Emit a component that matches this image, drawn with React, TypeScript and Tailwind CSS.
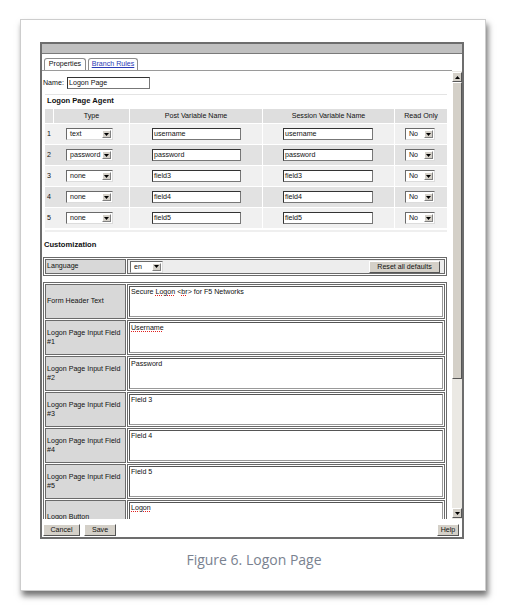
import React from "react";

const F = "font-['Liberation_Sans',Arial,sans-serif]";

function Arrow({ up }: { up?: boolean }) {
  return (
    <svg width="5" height="3" viewBox="0 0 5 3" className="block">
      <path d={up ? "M0 3H5L2.5 0Z" : "M0 0H5L2.5 3Z"} fill="#000" />
    </svg>
  );
}

function Select({ value, cls }: { value: string; cls: string }) {
  return (
    <div
      className={`flex h-[12px] items-stretch bg-white border border-t-[#6a6a6a] border-l-[#6a6a6a] border-b-[#dcdcdc] border-r-[#dcdcdc] ${cls}`}
    >
      <div className="flex-1 pl-[3px] leading-[10px] text-[7.1px] overflow-hidden whitespace-nowrap text-[#111]">
        {value}
      </div>
      <div className="w-[9px] my-[1px] mr-[1px] bg-[#d4d0c8] border border-t-white border-l-white border-b-[#808080] border-r-[#808080] flex items-center justify-center">
        <Arrow />
      </div>
    </div>
  );
}

function Input({ value, cls }: { value: string; cls: string }) {
  return (
    <div
      className={`h-[12px] bg-white border border-t-[#333] border-l-[#333] border-b-[#777] border-r-[#777] pl-[1px] text-[7.1px] leading-[10px] text-[#111] ${cls}`}
    >
      {value}
    </div>
  );
}

function Btn({ label, cls }: { label: string; cls: string }) {
  return (
    <div
      className={`h-[12px] bg-[#d4d0c8] border border-t-white border-l-white border-b-[#555] border-r-[#555] text-[7.1px] leading-[10px] text-center text-[#111] ${cls}`}
    >
      {label}
    </div>
  );
}

const rows = [
  ["1", "text", "username"],
  ["2", "password", "password"],
  ["3", "none", "field3"],
  ["4", "none", "field4"],
  ["5", "none", "field5"],
];

const Wavy = ({ children }: { children: React.ReactNode }) => (
  <span className="underline decoration-dotted decoration-[#e02020] decoration-[1px] underline-offset-[1px]">
    {children}
  </span>
);

const cust: { label: React.ReactNode; value: React.ReactNode }[] = [
  {
    label: "Form Header Text",
    value: (
      <>
        Secure <Wavy>Logon</Wavy> &lt;<Wavy>br</Wavy>&gt; for F5 Networks
      </>
    ),
  },
  { label: <>Logon Page Input Field<br />#1</>, value: <Wavy>Username</Wavy> },
  { label: <>Logon Page Input Field<br />#2</>, value: "Password" },
  { label: <>Logon Page Input Field<br />#3</>, value: "Field 3" },
  { label: <>Logon Page Input Field<br />#4</>, value: "Field 4" },
  { label: <>Logon Page Input Field<br />#5</>, value: "Field 5" },
  { label: "Logon Button", value: <Wavy>Logon</Wavy> },
];

export default function App() {
  return (
    <div className={`w-[506px] h-[609px] bg-white pt-[19px] pl-[20px] overflow-hidden ${F}`}>
      <div className="w-[466px] h-[572px] border border-[#cdcdcd] bg-white shadow-[2px_5px_6px_rgba(0,0,0,0.55)] pt-[22px] pl-[19px]">
        {/* window */}
        <div className="w-[424px] h-[497px] border-2 border-[#6d6d6d] bg-white flex flex-col text-[#111]">
          <div className="h-[10px] bg-[#c0c0c0] border-b border-[#7a7a7a]" />
          {/* tabs */}
          <div className="h-[17px] w-[410px] pt-[4px] pl-[2px] flex gap-[2px] border-b border-[#9a9a9a]">
            <div className="w-[42px] h-[12px] border border-b-0 border-[#8c8c8c] rounded-t-[3px] text-[7.1px] leading-[11px] text-center">
              Properties
            </div>
            <div className="w-[50px] h-[12px] border border-b-0 border-[#8c8c8c] rounded-t-[3px] text-[7.1px] leading-[11px] text-center text-[#2b3bb5] underline">
              Branch Rules
            </div>
          </div>
          {/* scroll area */}
          <div className="flex h-[448px]">
            <div className="w-[410px] overflow-hidden">
              {/* name row */}
              <div className="mt-[6px] h-[12px] flex items-center pl-[1px]">
                <div className="w-[24px] text-[7.1px] leading-[12px]">Name:</div>
                <Input value="Logon Page" cls="w-[83px]" />
              </div>
              <div className="mt-[5px] ml-[3px] w-[402px] h-[1px] bg-[#e4e4e4]" />
              <div className="mt-[1px] ml-[5px] h-[10px] text-[7.6px] leading-[10px] font-bold">
                Logon Page Agent
              </div>
              {/* agent table */}
              <div className="mt-[3px] ml-[3px] w-[402px] flex flex-col gap-y-[1px]">
                <div className="grid grid-cols-[8px_75px_132px_131px_52px] gap-x-[1px] h-[14px] text-[7.1px] leading-[14px] text-center">
                  <div className="bg-[#dedede]" />
                  <div className="bg-[#dedede]">Type</div>
                  <div className="bg-[#dedede]">Post Variable Name</div>
                  <div className="bg-[#dedede]">Session Variable Name</div>
                  <div className="bg-[#dedede]">Read Only</div>
                </div>
                {rows.map((r, i) => {
                  const bg = i % 2 === 0 ? "bg-[#f0f0f0]" : "bg-[#e2e2e2]";
                  return (
                    <div
                      key={r[0]}
                      className="grid grid-cols-[84px_132px_131px_52px] gap-x-[1px] h-[20px] text-[7.1px]"
                    >
                      <div className={`${bg} flex items-center pl-[2px]`}>
                        <div className="w-[19px]">{r[0]}</div>
                        <Select value={r[1]} cls="w-[47px]" />
                      </div>
                      <div className={`${bg} flex items-center pl-[22px]`}>
                        <Input value={r[2]} cls="w-[89px]" />
                      </div>
                      <div className={`${bg} flex items-center pl-[20px]`}>
                        <Input value={r[2]} cls="w-[90px]" />
                      </div>
                      <div className={`${bg} flex items-center pl-[10px]`}>
                        <Select value="No" cls="w-[30px]" />
                      </div>
                    </div>
                  );
                })}
              </div>
              <div className="mt-[2px] ml-[3px] w-[402px] h-[2px] bg-[#efefef]" />
              <div className="mt-[8px] ml-[2px] h-[10px] text-[7.6px] leading-[10px] font-bold">
                Customization
              </div>
              {/* language */}
              <div className="mt-[7px] ml-[1px] w-[404px] h-[19px] border border-[#6a6a6a] p-[1px] flex gap-[1px] bg-white">
                <div className="w-[81px] bg-[#d8d8d8] border border-[#6a6a6a] text-[7.1px] leading-[13px] pl-[1px]">
                  Language
                </div>
                <div className="flex-1 bg-[#ededed] border border-[#6a6a6a] flex items-center justify-between pl-[2px] pr-[4px]">
                  <Select value="en" cls="w-[33px]" />
                  <Btn label="Reset all defaults" cls="w-[71px]" />
                </div>
              </div>
              {/* textareas */}
              <div className="mt-[6px] ml-[1px] w-[404px] border border-[#6a6a6a] p-[1px] flex flex-col gap-[1px] bg-white">
                {cust.map((c, i) => (
                  <div key={i} className="flex h-[35px] gap-[1px] shrink-0">
                    <div className="w-[81px] bg-[#d8d8d8] border border-[#6a6a6a] flex items-center pl-[1px] text-[7.1px] leading-[9px]">
                      <div>{c.label}</div>
                    </div>
                    <div className="flex-1 border border-[#6a6a6a] bg-white p-[1px]">
                      <div className="h-full border border-t-[#555] border-l-[#555] border-b-[#999] border-r-[#999] bg-white px-[1px] text-[7.1px] leading-[10px]">
                        {c.value}
                      </div>
                    </div>
                  </div>
                ))}
              </div>
            </div>
            {/* scrollbar */}
            <div className="w-[10px] h-[448px] bg-[#ebe9e4] flex flex-col pt-[1px] pb-[1px]">
              <div className="h-[10px] bg-[#d4d0c8] border border-t-white border-l-white border-b-[#555] border-r-[#555] flex items-center justify-center">
                <Arrow up />
              </div>
              <div className="h-[297px] bg-[#d4d0c8] border border-t-white border-l-white border-b-[#555] border-r-[#555]" />
              <div className="flex-1" />
              <div className="h-[10px] bg-[#d4d0c8] border border-t-white border-l-white border-b-[#555] border-r-[#555] flex items-center justify-center">
                <Arrow />
              </div>
            </div>
          </div>
          {/* footer */}
          <div className="h-[18px] pt-[5px] flex pl-[1px] pr-[3px]">
            <Btn label="Cancel" cls="w-[37px]" />
            <Btn label="Save" cls="w-[32px] ml-[4px]" />
            <div className="flex-1" />
            <Btn label="Help" cls="w-[22px]" />
          </div>
        </div>
        <div className="w-[428px] mt-[11px] h-[20px] text-center font-['Open_Sans',sans-serif] text-[14px] leading-[20px] text-[#7a8290]">
          Figure 6. Logon Page
        </div>
      </div>
    </div>
  );
}
